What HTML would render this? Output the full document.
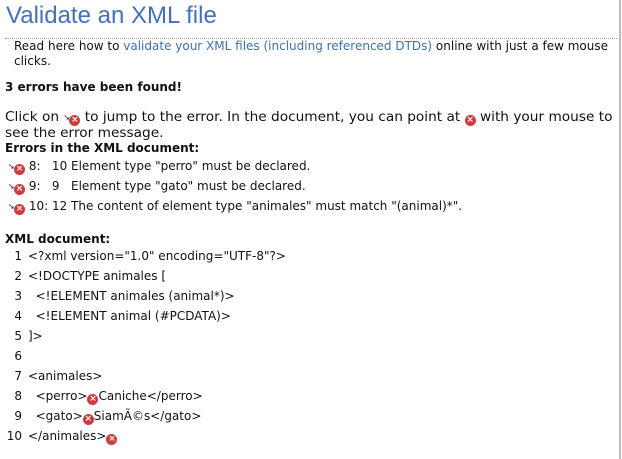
<!DOCTYPE html>
<html><head><meta charset="utf-8"><style>
body{margin:0;width:622px;height:459px;background:#fff;position:relative;overflow:hidden;font-family:"DejaVu Sans","Liberation Sans",sans-serif;font-size:12px;color:#111}
.rb{position:absolute;left:619px;top:0;width:2px;height:459px;background:#b8bcc4}
.t{position:absolute;white-space:nowrap}
h1{position:absolute;left:6px;top:2px;margin:0;font:24px "Liberation Sans",Arial,sans-serif;color:#4470c0}
.dot{position:absolute;left:5px;top:38px;width:612px;border-top:1px dotted #999}
a{color:#3f6eb5;text-decoration:none}
b{font-weight:bold}
.e{display:inline-block;width:11px;height:11px;border-radius:50%;background:#d23a3a;color:#fff;font:bold 9px/11px "DejaVu Sans",sans-serif;text-align:center;vertical-align:-1px}
.ar{display:inline-block;font-size:8px;color:#222;vertical-align:1px;width:6px}
.n{display:inline-block;width:22px;text-align:right;margin-right:6px}
.c{font-size:12px}
</style></head><body>
<div class="rb"></div>
<h1>Validate an XML file</h1>
<div class="dot"></div>
<div class="t" style="left:14px;top:39px;font-size:12px">Read here how to <a>validate your XML files (including referenced DTDs)</a> online with just a few mouse</div>
<div class="t" style="left:14px;top:54px">clicks.</div>
<div class="t" style="left:5px;top:80px"><b>3 errors have been found!</b></div>
<div class="t" style="left:5px;top:109px;font-size:13.7px">Click on <span class="ar">➘</span><span class="e">×</span> to jump to the error. In the document, you can point at <span class="e">×</span> with your mouse to</div>
<div class="t" style="left:5px;top:125px;font-size:13.7px">see the error message.</div>
<div class="t" style="left:5px;top:141px;font-size:12px"><b>Errors in the XML document:</b></div>
<div class="t" style="left:8px;top:159px"><span class="ar">➘</span><span class="e">×</span> 8:&nbsp;&nbsp; 10 Element type "perro" must be declared.</div>
<div class="t" style="left:8px;top:179px"><span class="ar">➘</span><span class="e">×</span> 9:&nbsp;&nbsp; 9&nbsp;&nbsp; Element type "gato" must be declared.</div>
<div class="t" style="left:8px;top:199px"><span class="ar">➘</span><span class="e">×</span> 10: 12 The content of element type "animales" must match "(animal)*".</div>
<div class="t" style="left:5px;top:232px"><b>XML document:</b></div>
<div class="t c" style="left:0;top:249px"><span class="n">1</span>&lt;?xml version="1.0" encoding="UTF-8"?&gt;</div>
<div class="t c" style="left:0;top:269px"><span class="n">2</span>&lt;!DOCTYPE animales [</div>
<div class="t c" style="left:0;top:289px"><span class="n">3</span>&nbsp; &lt;!ELEMENT animales (animal*)&gt;</div>
<div class="t c" style="left:0;top:309px"><span class="n">4</span>&nbsp; &lt;!ELEMENT animal (#PCDATA)&gt;</div>
<div class="t c" style="left:0;top:329px"><span class="n">5</span>]&gt;</div>
<div class="t c" style="left:0;top:349px"><span class="n">6</span></div>
<div class="t c" style="left:0;top:369px"><span class="n">7</span>&lt;animales&gt;</div>
<div class="t c" style="left:0;top:389px"><span class="n">8</span>&nbsp; &lt;perro&gt;<span class="e">×</span>Caniche&lt;/perro&gt;</div>
<div class="t c" style="left:0;top:409px"><span class="n">9</span>&nbsp; &lt;gato&gt;<span class="e">×</span>SiamÃ©s&lt;/gato&gt;</div>
<div class="t c" style="left:0;top:429px"><span class="n">10</span>&lt;/animales&gt;<span class="e">×</span></div>
</body></html>
